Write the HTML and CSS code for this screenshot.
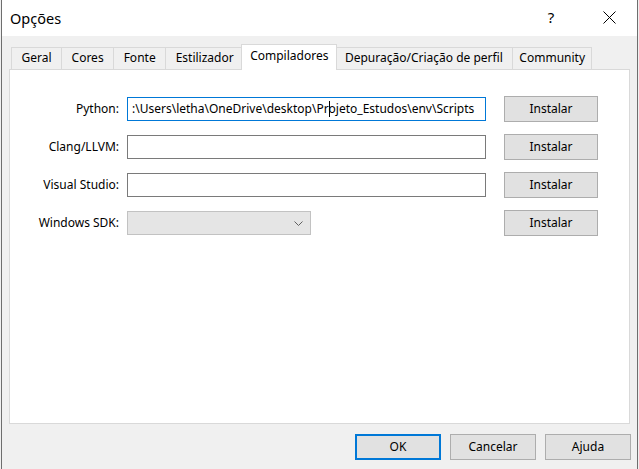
FILE: index.html
```html
<!DOCTYPE html>
<html lang="pt">
<head>
<meta charset="utf-8">
<title>Opções</title>
<link rel="stylesheet" href="styles.css">
</head>
<body>
<div class="window">
  <div class="titlebar">
    <div class="title">Opções</div>
    <div class="tb-btn tb-help">?</div>
    <div class="tb-btn tb-close">
      <svg width="13" height="13" viewBox="0 0 13 13"><path d="M0.5 0.5 L12.5 12.5 M12.5 0.5 L0.5 12.5" stroke="#000" stroke-width="1" fill="none"/></svg>
    </div>
  </div>
  <div class="content">
    <div class="tabs">
      <div class="tab">Geral</div>
      <div class="tab">Cores</div>
      <div class="tab">Fonte</div>
      <div class="tab">Estilizador</div>
      <div class="tab tab-active">Compiladores</div>
      <div class="tab">Depuração/Criação de perfil</div>
      <div class="tab tab-narrow">Community</div>
    </div>
    <div class="panel">
      <div class="form">
        <div class="label">Python:</div>
        <div class="field field-focus"><span>:\Users\letha\OneDrive\desktop\Pr</span><span class="caret"></span><span>ojeto_Estudos\env\Scripts</span></div>
        <div class="btn btn-install">Instalar</div>

        <div class="label">Clang/LLVM:</div>
        <div class="field"></div>
        <div class="btn btn-install">Instalar</div>

        <div class="label">Visual Studio:</div>
        <div class="field"></div>
        <div class="btn btn-install">Instalar</div>

        <div class="label">Windows SDK:</div>
        <div class="combo">
          <svg class="chev" width="9" height="5" viewBox="0 0 9 5"><path d="M0.5 0.5 L4.5 4.5 L8.5 0.5" stroke="#606060" stroke-width="1" fill="none"/></svg>
        </div>
        <div class="btn btn-install">Instalar</div>
      </div>
    </div>
    <div class="footer">
      <div class="btn btn-footer btn-default">OK</div>
      <div class="btn btn-footer">Cancelar</div>
      <div class="btn btn-footer">Ajuda</div>
    </div>
  </div>
</div>
</body>
</html>
```
FILE: styles.css
```css
html, body {
  margin: 0;
  padding: 0;
}
body {
  background: #f0f0f0;
  font-family: "Noto Sans", "Open Sans", sans-serif;
  font-size: 12px;
  color: #000;
  overflow: hidden;
}
.window {
  margin-left: 1px;
  width: 637px;
  height: 469px;
  box-sizing: border-box;
  border-left: 1px solid #6e6e6e;
  border-right: 1px solid #6e6e6e;
  background: #f0f0f0;
  display: flex;
  flex-direction: column;
}
.titlebar {
  height: 36px;
  flex-shrink: 0;
  background: #fff;
  display: flex;
  align-items: center;
}
.title {
  flex: 1;
  padding-left: 8px;
  font-size: 14.5px;
  line-height: 20px;
  padding-bottom: 1px;
}
.tb-btn {
  width: 46px;
  height: 36px;
  display: flex;
  align-items: center;
  justify-content: center;
}
.tb-help {
  font-size: 15px;
  margin-right: 12px;
  padding-bottom: 2px;
  box-sizing: border-box;
}
.tb-close {
  margin-right: 5px;
  padding-bottom: 2px;
  box-sizing: border-box;
}
.content {
  flex: 1;
  display: flex;
  flex-direction: column;
  padding: 8px 7px 0 7px;
}
.tabs {
  display: flex;
  align-items: flex-end;
  height: 26px;
  padding-left: 2px;
  margin-bottom: -1px;
  position: relative;
  z-index: 1;
}
.tab {
  box-sizing: border-box;
  height: 22px;
  margin-bottom: 1px;
  padding: 2px 9.5px 0;
  line-height: 16px;
  border: 1px solid #d9d9d9;
  border-bottom: none;
  background: #f0f0f0;
  white-space: nowrap;
}
.tab + .tab {
  margin-left: -1px;
}
.tab.tab-narrow {
  padding-left: 6px;
  padding-right: 6px;
}
.tab.tab-active {
  height: 26px;
  margin-bottom: 0;
  padding-top: 3px;
  margin-left: -3px;
  margin-right: -2px;
  padding-left: 8px;
  padding-right: 8px;
  background: #fff;
  position: relative;
  z-index: 2;
}
.panel {
  box-sizing: border-box;
  height: 355px;
  border: 1px solid #d9d9d9;
  background: #fff;
}
.form {
  display: grid;
  grid-template-columns: 109px 359px 94px;
  grid-auto-rows: 26px;
  column-gap: 8px;
  row-gap: 12px;
  align-items: center;
  padding-top: 26px;
}
.label {
  text-align: right;
  line-height: 16px;
  padding-bottom: 1px;
}
.field {
  box-sizing: border-box;
  height: 24px;
  border: 1px solid #7a7a7a;
  background: #fff;
  padding-left: 4px;
  line-height: 21px;
  white-space: nowrap;
  overflow: hidden;
}
.field-focus {
  border-color: #0078d7;
}
.caret {
  display: inline-block;
  width: 1px;
  height: 16px;
  background: #000;
  vertical-align: -4px;
  margin-right: -1px;
}
.combo {
  box-sizing: border-box;
  width: 184px;
  height: 24px;
  border: 1px solid #c2c2c2;
  background: #e5e5e5;
  display: flex;
  align-items: center;
  justify-content: flex-end;
  padding-right: 7px;
}
.btn {
  box-sizing: border-box;
  height: 26px;
  border: 1px solid #adadad;
  background: #e1e1e1;
  display: flex;
  align-items: center;
  justify-content: center;
  line-height: 16px;
  padding-bottom: 1px;
}
.btn-install {
  margin-left: 10px;
  width: 94px;
}
.footer {
  display: flex;
  justify-content: flex-end;
  gap: 9px;
  margin-top: 10px;
  margin-right: -1px;
}
.btn-footer {
  width: 86px;
}
.btn-default {
  border: 2px solid #0078d7;
}
```
